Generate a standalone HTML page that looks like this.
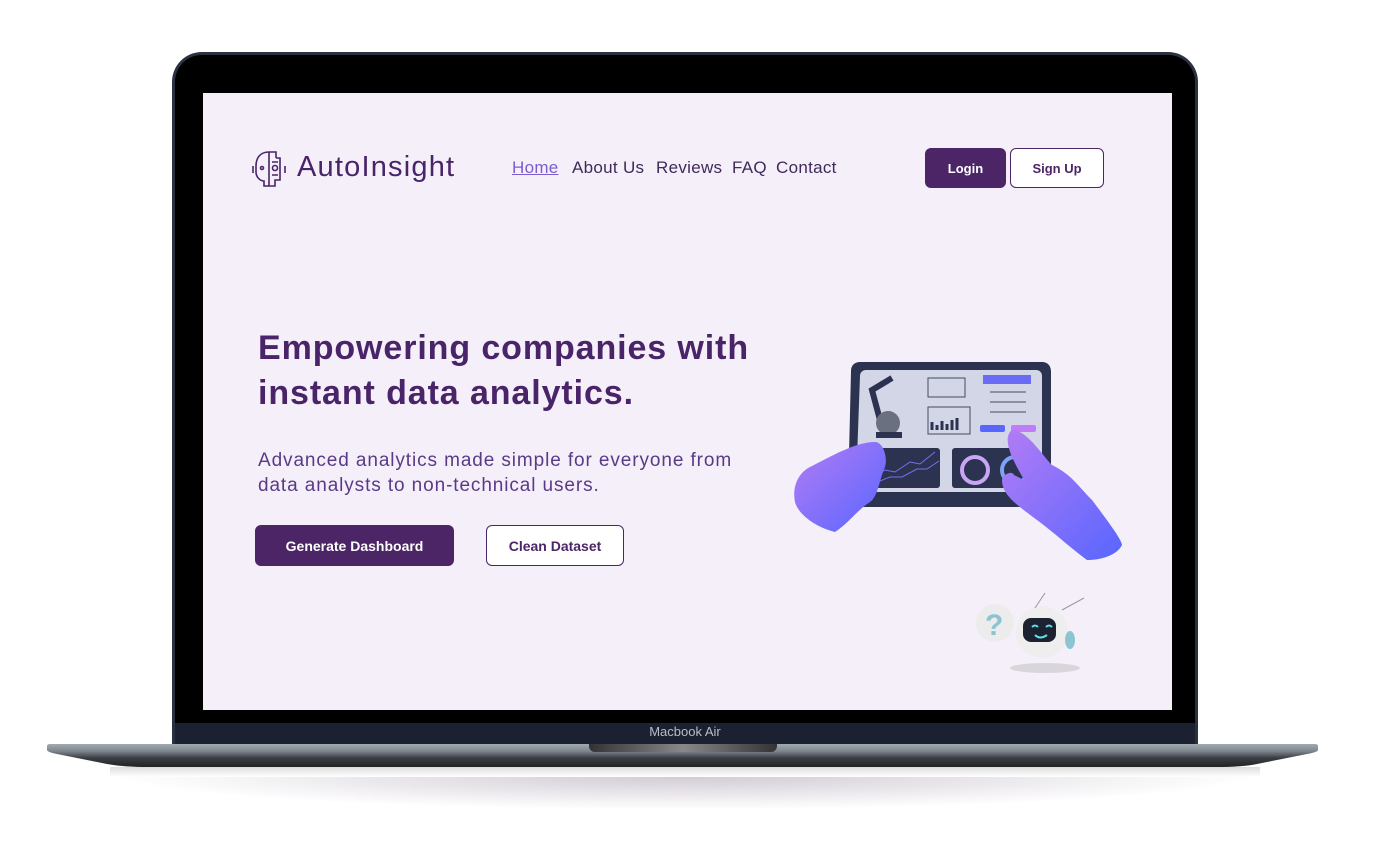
<!DOCTYPE html>
<html><head><meta charset="utf-8"><style>
*{margin:0;padding:0;box-sizing:border-box}
body{width:1395px;height:854px;background:#fff;position:relative;overflow:hidden;font-family:"Liberation Sans",sans-serif}
.shadow{position:absolute;left:110px;top:740px;width:1150px;height:70px;border-radius:50%;background:radial-gradient(ellipse at center,rgba(120,100,130,.35),rgba(255,255,255,0) 70%)}
.frame{position:absolute;left:172px;top:52px;width:1026px;height:694px;border-radius:30px 30px 0 0;background:#2a3140;padding:3px 3px 0}
.bezel{width:100%;height:100%;border-radius:27px 27px 0 0;background:#000;position:relative;overflow:hidden}
.chin{position:absolute;left:0;right:0;top:668px;height:40px;background:#1b2130}
.chin span{position:absolute;left:0;right:0;top:1px;text-align:center;color:#b8bec8;font-size:13px}
.screen{position:absolute;left:203px;top:93px;width:969px;height:617px;background:#f5effa}
.notch{position:absolute;left:589px;top:744px;width:188px;height:8px;background:linear-gradient(90deg,#333,#888,#333);border-radius:0 0 6px 6px}
.ref{position:absolute;left:110px;top:767px;width:1150px;height:10px;background:linear-gradient(#ddd,#fff)}
.t{position:absolute;color:#4a2468;white-space:nowrap}
.nav{font-size:17px;top:158px;color:#3f2a5a;letter-spacing:.3px}
.btn{position:absolute;border-radius:6px;font-weight:bold;font-size:14px;display:flex;align-items:center;justify-content:center}
</style></head><body>
<div class="shadow"></div>
<div class="ref"></div>
<div class="frame"><div class="bezel"><div class="chin"><span>Macbook Air</span></div></div></div>
<svg style="position:absolute;left:47px;top:744px" width="1271" height="24" viewBox="0 0 1271 24">
<defs><linearGradient id="b" x1="0" y1="0" x2="0" y2="1"><stop offset="0" stop-color="#a2abb2"/><stop offset=".3" stop-color="#80888f"/><stop offset=".6" stop-color="#3b3f45"/><stop offset="1" stop-color="#222"/></linearGradient></defs>
<path d="M0 2Q0 0 3 0H1268Q1271 0 1271 2V6Q1271 8 1260 10L1210 20Q1195 23 1170 23H100Q76 23 60 20L10 10Q0 8 0 6Z" fill="url(#b)"/></svg>
<div class="notch"></div>
<div class="screen"></div>

<svg style="position:absolute;left:250px;top:150px" width="38" height="38" viewBox="0 0 38 38" fill="none" stroke="#4a2468" stroke-width="1.6"><path d="M19 2C10 2 6 8 6 16v6c0 5 4 9 8 9v5h5M19 2v34M19 2h7v6M26 8h4v22h-5v6h-6"/><circle cx="12" cy="18" r="1.5"/><circle cx="25" cy="18" r="2.5"/><path d="M3 16v7M35 16v7M22 12h6M22 25h6"/></svg>
<div class="t" style="left:297px;top:151px;font-size:29px;letter-spacing:1.2px">AutoInsight</div>
<div class="t nav" style="left:512px;color:#7b5ccf;text-decoration:underline">Home</div>
<div class="t nav" style="left:572px">About Us</div>
<div class="t nav" style="left:656px">Reviews</div>
<div class="t nav" style="left:732px">FAQ</div>
<div class="t nav" style="left:776px">Contact</div>
<div class="btn" style="left:925px;top:148px;width:81px;height:40px;background:#4b2566;color:#fff;font-size:13px">Login</div>
<div class="btn" style="left:1010px;top:148px;width:94px;height:40px;border:1px solid #4b2566;color:#4b2566;font-size:13px;background:#fff">Sign Up</div>

<div class="t" style="left:258px;top:326px;font-size:34px;font-weight:bold;line-height:45px;letter-spacing:.9px">Empowering companies with<br>instant data analytics.</div>
<div class="t" style="left:258px;top:448px;font-size:19px;line-height:25px;color:#5a3a88;letter-spacing:.9px">Advanced analytics made simple for everyone from<br>data analysts to non-technical users.</div>
<div class="btn" style="left:255px;top:525px;width:199px;height:41px;background:#4b2566;color:#fff">Generate Dashboard</div>
<div class="btn" style="left:486px;top:525px;width:138px;height:41px;border:1px solid #4b2566;color:#4b2566;background:#fff">Clean Dataset</div>

<svg style="position:absolute;left:780px;top:350px" width="360" height="340" viewBox="0 0 360 340">
<defs><linearGradient id="h" x1="0" y1="0" x2="1" y2="1"><stop offset="0" stop-color="#b37cf5"/><stop offset="1" stop-color="#5866ff"/></linearGradient></defs>
<path d="M80 12h182c6 0 9 4 9 10v126c0 5-4 9-9 9H76c-6 0-9-4-8-10l3-126c0-6 4-9 9-9z" fill="#2b3350"/>
<path d="M86 20h170c4 0 6 3 6 6v110c0 4-3 6-6 6H82c-4 0-6-3-6-6l4-110c0-4 3-6 6-6z" fill="#d2d6e6"/>
<rect x="203" y="25" width="48" height="9" fill="#6a6cf6"/>
<rect x="148" y="28" width="37" height="19" fill="none" stroke="#444a60"/>
<rect x="148" y="57" width="42" height="27" fill="none" stroke="#444a60"/>
<path d="M152 80v-8M157 80v-5M162 80v-9M167 80v-6M172 80v-10M177 80v-12" stroke="#2b3350" stroke-width="3"/>
<path d="M100 70l-8-30 20-12" stroke="#2b3350" stroke-width="6" fill="none"/>
<circle cx="108" cy="73" r="12" fill="#6b7080"/><rect x="96" y="82" width="26" height="6" fill="#2b3350"/>
<path d="M210 42h36M210 52h36M210 62h36" stroke="#444a60"/>
<rect x="200" y="75" width="25" height="7" rx="2" fill="#5866ff"/><rect x="231" y="75" width="25" height="7" rx="2" fill="#c07df7"/>
<rect x="85" y="98" width="75" height="40" rx="3" fill="#2b3350"/>
<path d="M90 128l15-8 10 2 15-10 10 2 15-12M95 133l15-6 12 0 15-8 10 0 12-8" stroke="#7b6cf6" fill="none"/>
<rect x="172" y="98" width="75" height="40" rx="3" fill="#2b3350"/>
<circle cx="195" cy="120" r="13" fill="none" stroke="#c9a6f5" stroke-width="4"/><circle cx="235" cy="120" r="13" fill="none" stroke="#7ea2f6" stroke-width="4"/>
<path d="M95 92c-20 0-45 15-65 25-12 6-18 20-15 35 3 12 20 25 40 30 15-10 20-20 35-30 8-5 10-25 15-35 3-10-2-25-10-25z" fill="url(#h)"/>
<path d="M232 80c15 0 30 25 40 35 20 10 25 20 40 35 15 20 30 40 30 45-5 10-20 15-35 15-20-15-30-25-50-40-20-15-35-25-35-40 0-5 10-10 12-5l10 5c-5-10-25-40-12-50z" fill="url(#h)"/>
<circle cx="215" cy="273" r="19" fill="#ececec"/><text x="205" y="285" font-size="30" font-weight="bold" fill="#8cc4d4" font-family="Liberation Sans">?</text>
<ellipse cx="265" cy="318" rx="35" ry="5" fill="#ccc" opacity=".7"/>
<circle cx="262" cy="282" r="26" fill="#eeeeee"/><rect x="243" y="268" width="33" height="24" rx="8" fill="#1d2230"/>
<path d="M252 277q3-3 6 0M266 277q3-3 6 0M255 285q5 5 12 0" stroke="#5fe0e8" stroke-width="2" fill="none"/>
<path d="M255 258l10-15M282 260l22-12" stroke="#999"/>
<ellipse cx="290" cy="290" rx="5" ry="9" fill="#8cc4d4"/>
</svg>
</body></html>
